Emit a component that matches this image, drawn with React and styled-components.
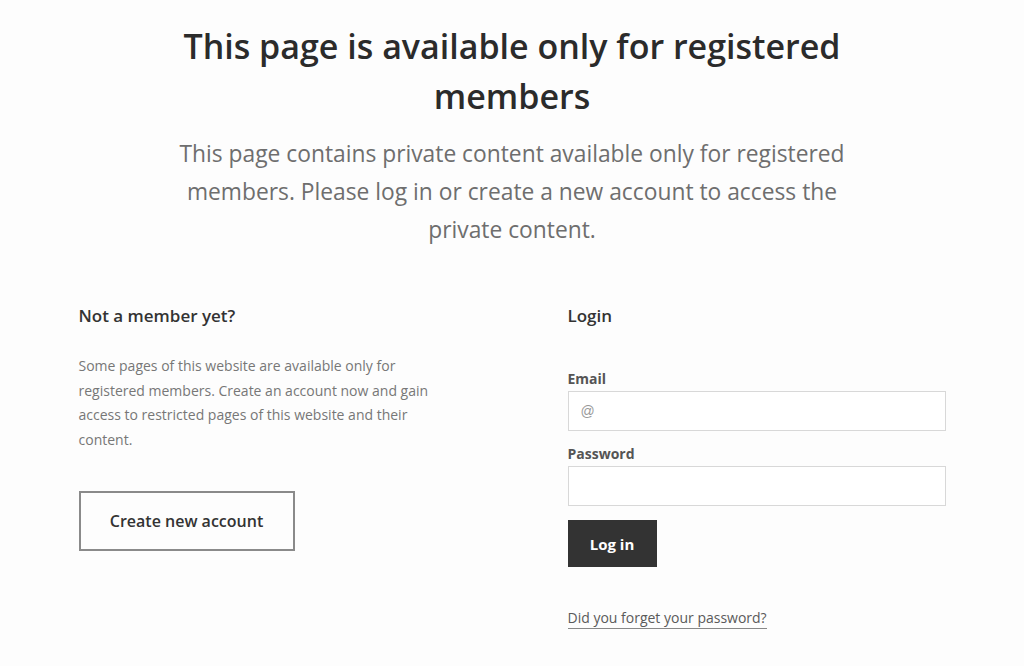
import React from 'react'
import styled, { createGlobalStyle } from 'styled-components'

const GlobalStyle = createGlobalStyle`
    body {
        margin: 0;
        background: #fdfdfd;
        font-family: "Open Sans", "Liberation Sans", sans-serif;
        color: #333;
    }
`

const Page = styled.div`
    width: 867px;
    margin: 0 auto;
    padding-top: 21px;
`

const Intro = styled.div`
    display: flex;
    flex-direction: column;
    align-items: center;
    text-align: center;
`

const Title = styled.h1`
    margin: 0;
    max-width: 690px;
    font-size: 34px;
    line-height: 50px;
    font-weight: 600;
    color: #2b2b2b;
`

const Lead = styled.p`
    margin: 14px 0 0;
    max-width: 710px;
    font-size: 22.8px;
    line-height: 38px;
    font-weight: 400;
    color: #6e6e6e;
`

const Columns = styled.div`
    display: grid;
    grid-template-columns: 378px 378px;
    justify-content: space-between;
    margin-top: 55px;
`

const Column = styled.div`
    display: flex;
    flex-direction: column;
    align-items: flex-start;
`

const Heading = styled.h3`
    margin: 0;
    font-size: 17px;
    line-height: 24px;
    font-weight: 600;
    color: #333;
`

const Text = styled.p`
    margin: 26px 0 0;
    max-width: 365px;
    font-size: 14px;
    line-height: 24.5px;
    color: #777;
`

const OutlineButton = styled.button`
    margin-top: 39px;
    width: 216px;
    height: 60px;
    border: 2px solid #8a8a8a;
    background: transparent;
    font-family: inherit;
    font-size: 16px;
    font-weight: 600;
    color: #333;
`

const Form = styled.form`
    display: flex;
    flex-direction: column;
    align-items: flex-start;
    width: 100%;
    margin-top: 41px;
`

const Label = styled.label`
    margin-top: ${props => props.first ? '0' : '13px'};
    font-size: 14px;
    line-height: 20px;
    font-weight: 700;
    color: #555;
`

const Input = styled.input`
    box-sizing: border-box;
    width: 100%;
    height: 40px;
    margin-top: 2px;
    padding: 0 12px;
    border: 1px solid #d8d8d8;
    background: #fff;
    font-family: "Liberation Sans", sans-serif;
    font-size: 14px;
    outline: none;

    &::placeholder {
        color: #999;
    }
`

const SubmitButton = styled.button`
    margin-top: 14px;
    width: 89px;
    height: 47px;
    border: none;
    background: #333;
    color: #fff;
    font-family: inherit;
    font-size: 15px;
    font-weight: 700;
`

const ForgotLink = styled.a`
    margin-top: 41px;
    font-size: 14px;
    line-height: 20px;
    color: #5a5a5a;
    text-decoration: none;
    border-bottom: 1px solid #888;
`

const App = () => {
  return (
    <>
      <GlobalStyle />
      <Page>
        <Intro>
          <Title>This page is available only for registered members</Title>
          <Lead>This page contains private content available only for registered members. Please log in or create a new account to access the private content.</Lead>
        </Intro>
        <Columns>
          <Column>
            <Heading>Not a member yet?</Heading>
            <Text>Some pages of this website are available only for registered members. Create an account now and gain access to restricted pages of this website and their content.</Text>
            <OutlineButton>Create new account</OutlineButton>
          </Column>
          <Column>
            <Heading>Login</Heading>
            <Form onSubmit={e => e.preventDefault()}>
              <Label first>Email</Label>
              <Input type="email" placeholder="@" />
              <Label>Password</Label>
              <Input type="password" />
              <SubmitButton>Log in</SubmitButton>
            </Form>
            <ForgotLink href="#">Did you forget your password?</ForgotLink>
          </Column>
        </Columns>
      </Page>
    </>
  )
}

export default App
